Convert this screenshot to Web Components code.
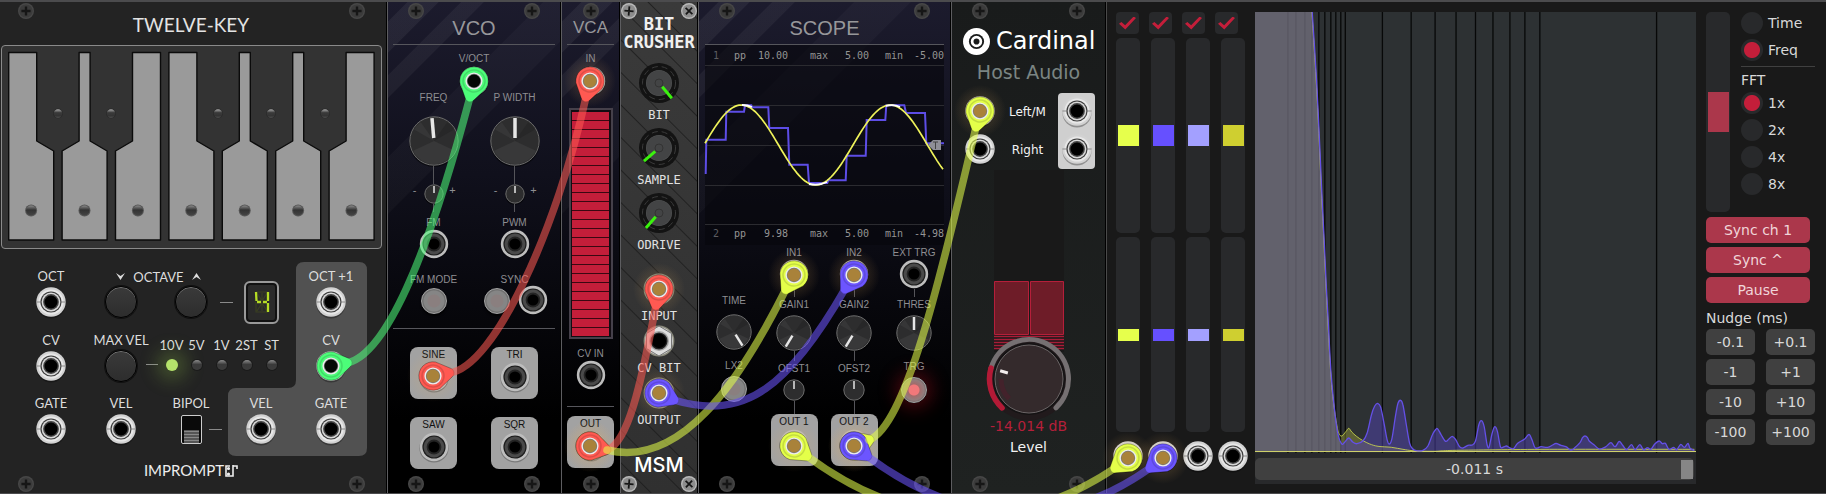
<!DOCTYPE html>
<html lang="en">
<head>
<meta charset="utf-8">
<meta name="viewport" content="width=device-width">
<title>Modular rack</title>
<style>
  html { background: #151515; }
  body { margin: 0; font-family: "Liberation Sans", sans-serif; }
</style>
</head>
<body>
<modular-rack>
  <key-module></key-module>
  <vco-module></vco-module>
  <vca-module></vca-module>
  <crusher-module></crusher-module>
  <scope-module></scope-module>
  <host-module></host-module>
  <analyzer-module></analyzer-module>
  <patch-cables slot="cables"></patch-cables>
</modular-rack>

<script>
const BASE = `*{box-sizing:border-box} svg{display:block;overflow:visible} hr{margin:0;border:0;width:100%;height:1px;background:#56565c}
button{font:inherit;color:inherit;margin:0;padding:0;border:0;cursor:pointer}`;

function define(name, css, render) {
  customElements.define(name, class extends HTMLElement {
    constructor() { super(); this.attachShadow({ mode: 'open' }); }
    connectedCallback() {
      const t = document.createElement('template');
      t.innerHTML = `<style>${BASE}${css}</style>${typeof render === 'function' ? render(this) : render}`;
      this.shadowRoot.replaceChildren(t.content.cloneNode(true));
    }
  });
}

// Point at clockwise angle a (degrees from twelve o'clock) and radius r.
const polar = (a, r) => {
  const t = (a - 90) * Math.PI / 180;
  return `${(Math.cos(t) * r).toFixed(2)} ${(Math.sin(t) * r).toFixed(2)}`;
};

/* ---------- rack ---------- */
define('modular-rack', `
  :host{display:block;position:relative;overflow:hidden;background:#4b4b4d;padding:2px 0 1px}
  .row{display:flex;align-items:stretch;isolation:isolate}
  ::slotted([slot=cables]){position:absolute;inset:0;pointer-events:none}
`, `<div class="row"><slot></slot></div><slot name="cables"></slot>`);

define('rack-screw', `:host{display:block;width:16px;height:16px}`, el => {
  const lt = el.hasAttribute('light');
  const turn = el.getAttribute('turn') || 0;
  return `<svg width="16" height="16" viewBox="-8 -8 16 16" aria-hidden="true">
    <circle r="8" fill="${lt ? '#b9b9b9' : '#474747'}"/><circle r="6.6" fill="${lt ? '#8d8d8d' : '#3b3b3b'}"/>
    <path transform="rotate(${turn})" d="M-4.6 0H4.6M0 -4.6V4.6" stroke="#161616" stroke-width="${lt ? 1.8 : 2.4}"/></svg>`;
});

define('module-frame', `
  :host{display:flex;flex-direction:column;height:100%;border-left:1px solid #5d5d60;border-right:1px solid #000}
  .screws{display:flex;justify-content:space-between;align-items:center;height:18px;padding:0 var(--screw-right,20px) 0 var(--screw-left,20px)}
  :host([single]) .screws{justify-content:center}
  .body{flex:1;display:flex;flex-direction:column}
`, el => {
  const lt = el.hasAttribute('light') ? 'light' : '';
  const a = `<rack-screw ${lt} ${lt && 'turn="5"'}></rack-screw>`;
  const b = el.hasAttribute('single') ? '' : `<rack-screw ${lt} ${lt && 'turn="42"'}></rack-screw>`;
  return `<div class="screws">${a}${b}</div><div class="body"><slot></slot></div><div class="screws">${a}${b}</div>`;
});

/* ---------- controls ---------- */
const JACKS = {
  silver: `<circle cy="2" r="14.5" fill="#000" opacity=".3"/><circle r="14.7" fill="#d2d2d2"/><circle r="12.6" fill="#e8e8e8"/>
    <path d="M-14.6 0H-10.6M10.6 0H14.6" stroke="#8a8a8a"/><circle r="10.6" fill="#3c3c3c"/><circle r="9.4" fill="#d8d8d8"/><circle r="7.9" fill="#444"/><circle r="6.5" fill="#000"/>`,
  dark: `<circle cy="1" r="14.6" fill="#000" opacity=".25"/><circle r="14.2" fill="#bdbdbd"/><circle r="11.6" fill="#1e1e1e"/><circle r="10.4" fill="#4a4a4a"/><circle r="7.4" fill="#242424"/><circle r="5.6" fill="#000"/>`,
  hex: `<circle r="15.4" fill="#8b8b7c"/><circle r="14" fill="#c9c9c9"/><path d="M0 -15L12.5 -7.5V7.5L0 15L-12.5 7.5V-7.5Z" fill="#dedede" stroke="#777"/><circle r="10" fill="#a4a4a4"/><circle r="8.6" fill="#222"/><circle r="7.2" fill="#000"/>`
};
define('jack-port', `
  :host{display:flex;flex-direction:column;align-items:center;white-space:nowrap}
  span{line-height:var(--lh,16px);margin-bottom:var(--lb,-2px)} span:empty{display:none}
  :host([below]){flex-direction:column-reverse;gap:4px}
  :host([plate]){width:47px;height:52px;padding-top:1px;gap:2px;background:#a2a2a2;border-radius:8px;color:#111}
  :host([plate]) span{line-height:14px}
`, el => `<span><slot></slot></span><svg width="30" height="30" viewBox="-15 -15 30 30" aria-hidden="true">${JACKS[el.getAttribute('kind') || 'dark']}</svg>`);

function knobArt(kind, size, angle) {
  const r = size / 2;
  if (kind === 'notched') {
    return `<circle r="20" fill="#131313"/><circle r="16.5" fill="none" stroke="#3a3a3a" stroke-width="1" stroke-dasharray="6 4"/>
      <circle r="13" fill="#505152"/><circle r="12.4" fill="#434445"/><circle r="4" fill="none" stroke="#333"/>
      <path transform="rotate(${angle})" d="M0 -5V-20" stroke="#3bf20e" stroke-width="3"/>`;
  }
  if (kind === 'level') {
    const k = 39.5;
    return `<circle r="41.500" fill="#211a1c"/>
      <path d="M${polar(-74, k)}A${k} ${k} 0 1 1 ${polar(137, k)}" fill="none" stroke="#757072" stroke-width="5" stroke-linecap="round"/>
      <path d="M${polar(223, k)}A${k} ${k} 0 0 1 ${polar(286, k)}" fill="none" stroke="#b31a36" stroke-width="5.5" stroke-linecap="round"/>
      <circle r="36" fill="#151314"/><circle r="34" fill="#342a2c" stroke="#6b6566"/>
      <path d="M${polar(225, 28)}A28 28 0 0 1 ${polar(270, 28)}" fill="none" stroke="#43222b" stroke-width="5"/>
      <path transform="rotate(-74)" d="M0 -22V-30" stroke="#f2eded" stroke-width="3"/>`;
  }
  const big = size > 30;
  return `<circle cy="1" r="${r}" fill="#000" opacity=".5"/><circle r="${r - .8}" fill="#2d2d2e" stroke="#6c6c6c" stroke-width="1"/>
    ${big ? `<path d="M0 0L${polar(115, r - 2)}A${r - 2} ${r - 2} 0 0 1 ${polar(245, r - 2)}Z" fill="#383839"/><path d="M0 0L${polar(-60, r - 2)}A${r - 2} ${r - 2} 0 0 1 ${polar(-35, r - 2)}Z" fill="#363637"/><path d="M0 0L${polar(35, r - 2)}A${r - 2} ${r - 2} 0 0 1 ${polar(60, r - 2)}Z" fill="#272728"/>` : ''}
    <path transform="rotate(${angle})" d="M0 ${big ? -3 : -1}V${-r + 2}" stroke="#e6e6e6" stroke-width="${size > 40 ? 3.5 : big ? 2.5 : 1.5}"/>`;
}
define('rotary-knob', `
  :host{display:grid;place-items:center}
  svg,input{grid-area:1/1}
  input{width:100%;height:100%;margin:0;opacity:0;cursor:grab;min-width:0}
`, el => {
  const s = +el.getAttribute('size') || 50;
  return `<svg width="${s}" height="${s}" viewBox="${-s / 2} ${-s / 2} ${s} ${s}" aria-hidden="true">${knobArt(el.getAttribute('kind'), s, el.getAttribute('angle') || 0)}</svg>
    <input type="range" aria-label="${el.getAttribute('name')}" style="width:${s}px;height:${s}px">`;
});

define('push-button', `
  :host{display:block;width:26px;height:26px}
  button{display:block;width:100%;height:100%;border-radius:50%;border:1px solid #a5a5a5;background:radial-gradient(circle,#8a7f7f 0 6px,#858585 7px 10px,#707070 11px);box-shadow:0 2px 2px #000c}
  :host([lit]) button{background:radial-gradient(circle,#f2787a 0 5px,#a26b6b 6px,#927c7c 10px,#7a6c6c 12px);box-shadow:0 0 18px 5px #b0101c66}
  :host([round]){width:32px;height:32px}
  :host([round]) button{background:linear-gradient(#3a3a3a,#2d2d2d);border:1px solid #000;box-shadow:0 0 0 1px #111,inset 0 1px #777}
`, el => `<button type="button" aria-label="${el.getAttribute('name')}"></button>`);

define('status-led', `
  :host{display:block;width:10px;height:10px;border-radius:50%;background:linear-gradient(#8d8d8d,#3a3a3a 45%,#3c3c3c);box-shadow:0 0 0 1px #1b1b1b}
  :host([on]){width:12px;height:12px;background:#b5e36b;box-shadow:0 0 18px 9px #9bd04a44}
`, '');

/* ---------- Twelve-Key ---------- */
function keyboard() {
  const w = 45, top = 6.5, bot = 194, y1 = 95, y2 = 105;
  const upper = [[0, 28], [17, 28], [17, 45], [0, 28], [17, 28], [17, 28], [17, 45]];
  return upper.map(([a, b], i) => {
    const x = Math.round((6.7 + 53.4 * i) * 10) / 10, L = x + a, R = x + b;
    const left = a ? `L${x} ${y2}L${L} ${y1}V${top}` : `V${top}`;
    const right = b < w ? `V${y1}L${x + w} ${y2}V${bot}` : `V${bot}`;
    return `<path d="M${x} ${bot}${left}H${R}${right}Z" fill="#9a9a9a" stroke="#0b0b0b" stroke-width="1.400" stroke-linejoin="round"/>
      <circle cx="${x + 22.4}" cy="164.500" r="6" fill="#555"/><circle cx="${x + 22.4}" cy="164.500" r="5" fill="url(#d)"/>`;
  }).join('') + [56, 109, 216, 269, 323].map(x => `<circle cx="${x}" cy="67.500" r="5" fill="#2b2b2b"/><circle cx="${x}" cy="67.500" r="4.200" fill="url(#s)"/>`).join('');
}
define('key-module', `
  :host{display:block;flex:none;width:387px;background:#232323;color:#ddd;font:13px/20px Lato,sans-serif}
  module-frame{--screw-left:18px;--screw-right:21px;border-left:0}
  h2{margin:-1px 4px 14px 0;font-size:19px;font-weight:400;line-height:12px;text-align:center;color:#e4e4e4}
  .keys{width:381px;height:204px;margin-left:1px;border:1px solid #8a8a8a;border-radius:4px;background:#333}
  .grid{display:grid;grid-template-columns:repeat(5,70px);grid-template-rows:64px 63px 51px;margin:17px 0 0 16px}
  .plate{grid-area:1/4/4/6}
  .grid>*{z-index:1}
  .grid>.plate{z-index:0}
  jack-port{--lh:21px;--lb:0}
  .oct{grid-area:1/2/2/5}
  .oct .lab{display:flex;justify-content:center;align-items:center;gap:8px;width:145px;height:21px}
  .line{display:flex;align-items:center;height:30px}
  .oct .line{padding-left:19px}
  i{display:block;width:13px;height:1px;background:#8a8a8a}
  .disp{width:35px;height:43px;border:2px solid #999;border-radius:6px;background:#2a2a2a;box-shadow:inset 0 0 0 2px #111;display:grid;place-items:center}
  .vel{grid-area:2/2/3/5;display:flex}
  .vel .max{width:70px;display:flex;flex-direction:column;align-items:center;line-height:21px;white-space:nowrap}
  .vel i{margin:34px 0 0 -10px;width:12px}
  .leds{display:grid;grid-template-columns:repeat(5,25px);grid-template-rows:16px 24px;place-items:center;margin:7px 0 0 1px;line-height:16px;white-space:nowrap}
  .bip{display:grid;grid-template-columns:1fr 21px 1fr;grid-template-rows:21px 30px;align-items:center}
  .bip label{grid-column:1/4;text-align:center;line-height:21px}
  .bip input{grid-column:2;appearance:none;margin:0;width:21px;height:29px;border:1px solid #ccc;border-radius:2px;background:repeating-linear-gradient(#555 0 1px,#888 1px 2px,#555 2px 3px) 50% 100%/15px 13px no-repeat #0a0a0a}
  .bip i{margin-left:7px}
  .brand{display:flex;justify-content:center;align-items:center;gap:1px;margin:21px 4px 0 0;height:10px;font-size:15px;line-height:10px;color:#eee}
`, () => {
  const jack = (row, col, t) => `<jack-port kind="silver" style="grid-area:${row}/${col}">${t}</jack-port>`;
  return `<module-frame>
  <h2>TWELVE-KEY</h2>
  <div class="keys"><svg width="379" height="202" viewBox="0 0 379 202" aria-hidden="true">
    <defs><linearGradient id="d" x2="0" y2="1"><stop stop-color="#8a8a8a"/><stop offset=".45" stop-color="#333"/><stop offset="1" stop-color="#444"/></linearGradient>
    <linearGradient id="s" x2="0" y2="1"><stop stop-color="#aaa"/><stop offset=".4" stop-color="#3a3a3a"/><stop offset=".8" stop-color="#333"/><stop offset="1" stop-color="#555"/></linearGradient></defs>${keyboard()}</svg></div>
  <div class="grid">
    <svg class="plate" width="140" height="178" viewBox="0 0 140 178" aria-hidden="true"><path d="M78 -4H133Q141 -4 141 4V182Q141 190 133 190H10Q2 190 2 182V130Q2 122 10 122H62Q70 122 70 114V4Q70 -4 78 -4Z" fill="#515151"/></svg>
    ${jack(1, 1, 'OCT')}
    <div class="oct"><div class="lab">
        <svg width="9" height="7" aria-hidden="true"><path d="M0 0L4.500 7L9 0L4.500 3Z" fill="#ddd"/></svg>OCTAVE<svg width="9" height="7" aria-hidden="true"><path d="M0 7L4.500 0L9 7L4.500 4Z" fill="#ddd"/></svg></div>
      <div class="line"><push-button round name="Octave down"></push-button><push-button round name="Octave up" style="margin-left:38px"></push-button><i style="margin:0 11px 0 13px"></i>
        <div class="disp" role="img" aria-label="4"><svg width="16" height="22" viewBox="0 0 16 22" fill="none" stroke-width="2.300"><path d="M2 1H14M2 11V21H14M3 2L8 10L13 2M3 20L8 12L13 20M8 2V20" stroke="#3a3f22" stroke-width="1.200"/><path d="M2 1L2.500 10M3 11H7M9 11H13M14 1L14 10M14 12V21" stroke="#b5dc24"/></svg></div></div></div>
    ${jack(1, 5, 'OCT +1')}
    ${jack(2, 1, 'CV')}
    <div class="vel"><div class="max">MAX VEL<push-button round name="Max velocity" style="margin-top:-1px"></push-button></div><i></i>
      <div class="leds"><span>10V</span><span>5V</span><span>1V</span><span>2ST</span><span>ST</span><status-led on></status-led><status-led></status-led><status-led></status-led><status-led></status-led><status-led></status-led></div></div>
    ${jack(2, 5, 'CV')}
    ${jack(3, 1, 'GATE')}
    ${jack(3, 2, 'VEL')}
    <div class="bip" style="grid-area:3/3"><label for="bp">BIPOL</label><input id="bp" type="checkbox"><i></i></div>
    ${jack(3, 4, 'VEL')}
    ${jack(3, 5, 'GATE')}
  </div>
  <div class="brand">IMPROMPT<svg width="13" height="13" viewBox="0 0 13 13" fill="none" stroke="#eee" stroke-width="1.600" aria-hidden="true"><path d="M5 2H1V12H8V1"/><circle cx="3.500" cy="10" r=".8"/><path d="M8 2H12V5"/><circle cx="3.500" cy="4.500" r=".8"/></svg></div>
</module-frame>`;
});

/* ---------- Fundamental-style panels share a look ---------- */
const NIGHT = `
  :host{display:block;flex:none;color:#8e8e92;font:10px/14px "Liberation Sans",sans-serif;
    background:linear-gradient(135deg,#fff0 14px,#ffffff0e 15px 36px,#fff0 37px 52px,#ffffff0c 53px 68px,#fff0 69px 110px,#ffffff07 111px 150px,#fff0 151px),linear-gradient(#1c1b2d,#10101c 35%,#07070c 62%,#000 85%)}
  h2{margin:0 0 8px;font-size:20px;font-weight:400;line-height:16px;text-align:center;color:#97979a}
  .col{display:flex;flex-direction:column;align-items:center}
  .col>span{line-height:16px;margin-bottom:-2px}
  .stem{width:1px;background:#55555a}`;

define('vco-module', `${NIGHT}
  :host{width:174px}
  .pad{padding:0 5px;display:flex;flex-direction:column;align-items:center}
  .two{display:grid;grid-template-columns:81px 81px;justify-items:center;justify-content:center;width:100%}
  .trim{display:grid;grid-template-columns:16px 20px 16px;justify-items:center;gap:1px;line-height:12px;font-size:11px}
  .pair{display:flex;align-items:center;gap:8px;height:30px}
`, `<module-frame><h2>VCO</h2><div class="pad"><hr>
  <jack-port style="margin-top:6px;height:39px;gap:1px">V/OCT</jack-port>
  <div class="two">
    ${[['FREQ', 'FM', -5], ['P WIDTH', 'PWM', 0]].map(([a, b, g]) => `<div class="col"><span>${a}</span><rotary-knob size="50" angle="${g}" name="${a}" style="margin-top:12px"></rotary-knob><div class="stem" style="height:18px"></div><div class="trim">-<rotary-knob size="20" name="${b} amount"></rotary-knob>+</div><div class="stem" style="height:8px;margin-bottom:3px"></div><jack-port>${b}</jack-port></div>`).join('')}
    <div class="col" style="margin-top:13px"><span>FM MODE</span><div class="pair"><push-button name="FM mode"></push-button></div></div>
    <div class="col" style="margin-top:13px"><span>SYNC</span><div class="pair" style="padding-left:2px"><push-button name="Sync"></push-button><jack-port></jack-port></div></div>
  </div>
  <hr style="margin:12px 0 18px">
  <div class="two" style="row-gap:18px">${['SINE', 'TRI', 'SAW', 'SQR'].map(t => `<jack-port plate>${t}</jack-port>`).join('')}</div>
</div></module-frame>`);

define('vca-module', `${NIGHT}
  :host{width:59px}
  h2{font-size:17px}
  .pad{padding:0 5px;display:flex;flex-direction:column;align-items:center}
  .meter{width:44px;height:231px;margin:12px 0 7px;border:2px solid #45404a;padding:2px;background:repeating-linear-gradient(#c41e3a 0 8px,#3a0812 8px 9px) 50% 50%/37px 224px no-repeat #120c12}
`, `<module-frame single><h2>VCA</h2><div class="pad"><hr>
  <jack-port style="margin-top:6px;gap:1px">IN</jack-port>
  <div class="meter" role="img" aria-label="Level meter"></div>
  <jack-port>CV IN</jack-port>
  <hr style="margin:16px 0 9px"><jack-port plate>OUT</jack-port>
</div></module-frame>`);

define('crusher-module', `
  :host{display:block;flex:none;width:78px;color:#e2e2e2;font:12px/16px "DejaVu Sans Mono",monospace;
    background:repeating-linear-gradient(45deg,#1c1c1c00 0 21px,#1c1c1ccc 22px,#1c1c1c00 23px),linear-gradient(#3a3a3a,#303030)}
  module-frame{--screw-left:0px;--screw-right:0px}
  h2{margin:-5px -4px 12px;font-size:17px;line-height:18px;text-align:center;color:#f0f0f0}
  .k{display:flex;flex-direction:column;align-items:center;gap:4px;margin-bottom:5px}
  jack-port{--lh:16px;--lb:0;margin-bottom:2px}
  .logo{margin-top:25px;text-align:center;font:500 20px/20px Inter,sans-serif;color:#fff}
`, `<module-frame light><h2>BIT<br>CRUSHER</h2>
  ${[['BIT', 140], ['SAMPLE', 229], ['ODRIVE', 221]].map(([t, a]) => `<div class="k"><rotary-knob kind="notched" size="40" angle="${a}" name="${t}"></rotary-knob>${t}</div>`).join('')}
  <jack-port below kind="hex" style="margin-top:16px">INPUT</jack-port><jack-port below kind="hex">CV BIT</jack-port><jack-port below kind="hex">OUTPUT</jack-port>
  <div class="logo">MSM</div></module-frame>`);

/* ---------- Scope ---------- */
function sine() {
  let d = '';
  for (let x = 0; x <= 239; x += 2) d += `${d ? 'L' : 'M'}${x} ${(80 - 40 * Math.sin((x + 1) / 149 * 2 * Math.PI)).toFixed(1)}`;
  return d;
}
const STEPS = [[47,522],[49,419],[107,419],[109,335],[162,335],[165,316],[184,316],[186,322],[235,322],[238,384],[294,384],[298,494],[353,494],[357,549],[412,549],[415,541],[467,541],[470,467],[527,467],[530,360],[586,360],[589,316],[643,316],[648,339],[705,339],[709,430],[762,430]]
  .map(([x, y], i) => `${i ? 'L' : 'M'}${(x / 3 - 15).toFixed(1)} ${(y / 3 - 65).toFixed(1)}`).join('');
define('scope-module', `${NIGHT}
  :host{width:253px}
  .pad{padding:0 6px}
  .screen{background:#07070c99}
  .stats{display:grid;grid-template-columns:21px 24px 30px 40px 41px 34px 1fr;padding-left:8px;height:20px;align-items:start;font:10px/22px "DejaVu Sans Mono",monospace;color:#949494;margin:0}
  .stats b{font-weight:400;color:#5c5c60} .stats span:nth-child(n+3){text-align:right}
  svg+.stats{line-height:18px}
  .four{display:grid;grid-template-columns:repeat(4,60px);margin-left:-1px;white-space:nowrap}
  .stem{margin:0 auto}
`, () => {
  const stats = (n, a, b, c) => `<div class="stats"><b>${n}</b><span>pp</span><span>${a}</span><span>max</span><span>${b}</span><span>min</span><span>${c}</span></div>`;
  return `<module-frame><h2>SCOPE</h2><div class="pad"><hr>
  <div class="screen">${stats(1, '10.00', '5.00', '-5.00')}
    <svg width="239" height="160" viewBox="0 0 239 160" fill="none" role="img" aria-label="Waveforms">
      <path d="M0 .5H239M0 40.500H239M0 80.500H239M0 120.500H239M0 159.500H239" stroke="#2b2b30"/>
      <path d="${STEPS}" stroke="#5d4de6" stroke-width="2"/>
      <path d="${sine()}" stroke="#eef25a" stroke-width="1.700"/>
      <path d="M37 40q6 0 10 2M104 119q10 2 18 -2M181 41q8 -2 14 1" stroke="#fff" stroke-width="1.800"/>
      <path d="M223 80L228 75H236V85H228Z" fill="#8f8f97"/><path d="M228 77H233M230.500 77V84" stroke="#444"/></svg>
    ${stats(2, '9.98', '5.00', '-4.98')}</div>
  <div class="four">
    <div class="col" style="padding-top:49px">TIME<rotary-knob size="36" angle="148" name="Time" style="margin-top:6px"></rotary-knob><span style="margin:8px 0 2px">LX2</span><push-button name="LX2"></push-button></div>
    ${[1, 2].map(n => `<div class="col"><jack-port>IN${n}</jack-port><div class="stem" style="height:8px"></div><span>GAIN${n}</span><rotary-knob size="36" angle="211" name="Gain ${n}" style="margin-top:4px"></rotary-knob><div class="stem" style="height:10px"></div><span>OFST${n}</span><rotary-knob size="22" name="Offset ${n}" style="margin-top:4px"></rotary-knob><div class="stem" style="height:13px"></div><jack-port plate>OUT ${n}</jack-port></div>`).join('')}
    <div class="col"><jack-port>EXT TRG</jack-port><div class="stem" style="height:8px"></div><span>THRES</span><rotary-knob size="36" name="Threshold" style="margin-top:4px"></rotary-knob><span style="margin:8px 0 2px">TRG</span><push-button lit name="Trigger"></push-button></div>
  </div></div></module-frame>`;
});

/* ---------- Cardinal host audio ---------- */
define('host-module', `
  :host{display:block;flex:none;width:155px;color:#f2f2f2;font:12px/16px "DejaVu Sans",sans-serif;background:linear-gradient(#191b1b,#1f2221)}
  .brand{display:flex;align-items:center;gap:6px;margin:6px 0 0 11px;height:30px;font-size:24px;line-height:34px;color:#fff}
  h3{margin:6px 0 11px;font-size:19px;line-height:20px;font-weight:400;text-align:center;color:#7b8583}
  .io{display:grid;grid-template-columns:55px 41px 57px;place-items:center;grid-template-rows:38px 38px;white-space:nowrap}
  .io .out{grid-area:1/3/3/4;width:37px;height:76px;border-radius:4px;background:#cfcfcf;display:grid;place-items:center}
  .meter{align-self:center;width:70px;height:182px;margin-top:1px;background:#191919}
  .db{margin-top:-2px;text-align:center;font-size:14px;color:#b51f3a} .lv{margin-top:5px;text-align:center;font-size:14px}
`, () => {
  let bars = '';
  for (let y = 166.5; y < 181; y += 3) bars += `M0 ${y}H70`;
  return `<module-frame>
  <div class="brand"><svg width="27" height="27" viewBox="-13 -13 26 26" aria-hidden="true"><circle r="13" fill="#fff"/><circle r="7.300" fill="#191b1b"/><circle r="4.200" fill="none" stroke="#fff" stroke-width="2.600"/></svg>Cardinal</div>
  <h3>Host Audio</h3>
  <div class="io"><jack-port kind="silver"></jack-port><span>Left/M</span><div class="out"><jack-port kind="silver"></jack-port><jack-port kind="silver"></jack-port></div><jack-port kind="silver" style="grid-area:2/1"></jack-port><span>Right</span></div>
  <div class="meter"><svg width="70" height="182" viewBox="0 0 70 182" role="img" aria-label="Output level"><path d="M.5 111.500H34.500V164.500H.5ZM36.500 111.500H69.500V164.500H36.500Z" fill="#6e1c28" stroke="#b51f3a"/><path d="${bars}" stroke="#a81d38" stroke-width="1.500"/></svg></div>
  <rotary-knob kind="level" size="82" name="Level" style="margin-top:-14px"></rotary-knob>
  <div class="db">-14.014 dB</div><div class="lv">Level</div></module-frame>`;
});

/* ---------- Analyzer ---------- */
// Spectrum samples on a 3x grid whose origin is 15,36.
const EDGE = [[187,36],[200,240],[208,400],[215,560],[222,700],[229,850],[236,980],[243,1110],[250,1190]];
const VIOLET = [...EDGE,[262,1290],[275,1331],[286,1325],[297,1314],[310,1327],[322,1331],[340,1322],[352,1300],[365,1245],[375,1218],[384,1210],[393,1222],[402,1265],[412,1318],[419,1332],[427,1315],[437,1250],[445,1210],[453,1201],[460,1215],[470,1275],[480,1330],[490,1347],[500,1352],[520,1351],[535,1338],[548,1305],[557,1290],[564,1286],[575,1305],[588,1324],[598,1317],[608,1309],[618,1318],[630,1340],[640,1344],[655,1336],[668,1335],[678,1323],[688,1275],[696,1262],[704,1280],[713,1335],[719,1340],[728,1300],[736,1280],[744,1295],[753,1340],[762,1341],[771,1338],[780,1343],[792,1346],[805,1330],[826,1317],[839,1303],[848,1320],[858,1344],[875,1340],[895,1342],[910,1335],[920,1330],[935,1336],[950,1340],[965,1350],[978,1342],[992,1328],[1000,1313],[1007,1308],[1015,1313],[1020,1323],[1035,1335],[1050,1347],[1070,1340],[1085,1328],[1098,1340],[1110,1324],[1120,1335],[1132,1349],[1147,1334],[1158,1349],[1172,1334],[1183,1349],[1195,1343],[1205,1348],[1217,1332],[1230,1323],[1240,1331],[1249,1330],[1260,1348],[1274,1342],[1283,1349],[1295,1333],[1306,1342],[1317,1330],[1323,1345],[1336,1351]];
const GOLD = [...EDGE.map(([x, y]) => [x - 1, y]),[260,1270],[267,1300],[276,1308],[288,1295],[297,1285],[306,1296],[320,1309],[340,1322],[360,1332],[385,1339],[425,1342],[460,1348],[490,1352],[550,1354],[620,1351],[900,1348],[1336,1348]];
function smooth(pts) {
  const p = pts.map(([x, y]) => [x / 3 - 5, y / 3 - 12]);
  let d = `M${p[0].join(' ')}`;
  for (let i = 0; i < p.length - 1; i++) {
    const a = p[i - 1] || p[i], b = p[i], c = p[i + 1], e = p[i + 2] || c;
    d += `C${[b[0] + (c[0] - a[0]) / 6, b[1] + (c[1] - a[1]) / 6, c[0] - (e[0] - b[0]) / 6, c[1] - (e[1] - b[1]) / 6, c[0], c[1]].map(v => v.toFixed(1)).join(' ')}`;
  }
  return d;
}
const LINES = [33,41,50,57,64,70,76,81,86,90.5,127.7,156.5,180.5,201.5,221,238.5,255.5,270.5,285.5,402.500];
define('spectrum-graph', `:host{display:block;background:#2d3133} svg{width:100%;height:441px;overflow:hidden} path{vector-effect:non-scaling-stroke}`,
() => {
  const area = ' L442 440H0V0Z', a = smooth(VIOLET), g = smooth(GOLD);
  return `<svg viewBox="0 0 442 441" preserveAspectRatio="none" fill="none" role="img" aria-label="Frequency spectrum">
    <defs><clipPath id="l"><rect width="86" height="441"/></clipPath><clipPath id="r"><rect x="86" width="360" height="441"/></clipPath></defs>
    <path d="${LINES.map(x => `M${x} 0V441`).join('')}" stroke="#070808" stroke-width="1.300"/>
    <path clip-path="url(#l)" d="${a}${area}" fill="#747180" fill-opacity=".75"/>
    <g clip-path="url(#r)"><path d="${g}${area}" fill="#a5a93c" fill-opacity=".4"/><path d="${a}${area}" fill="#4e41a5" fill-opacity=".55"/></g>
    <path d="${g}" stroke="#d3e04c" stroke-opacity=".8"/>
    <path d="M0 439.500H442" stroke="#cfd06a"/>
    <path d="${a}" stroke="#6450e6" stroke-width="1.300"/></svg>`;
});

define('analyzer-module', `
  :host{display:grid;flex:1;min-width:480px;grid-template-columns:129px 1fr 109px;column-gap:10px;align-items:start;padding:10px 11px 9px 10px;background:#191919;color:#d8d8d8;font:14px/16px "DejaVu Sans",sans-serif;box-shadow:inset 1px 0 #4a4a4a}
  .checks{display:flex;gap:10px}
  input{appearance:none;margin:0;display:block}
  .checks input{width:23px;height:22px;border-radius:4px;background:#28292b;display:grid;place-items:center}
  .checks input:checked::before{content:"";width:17px;height:13px;background:#c41e3a;clip-path:polygon(0 55%,14% 42%,36% 68%,86% 0,100% 12%,37% 100%)}
  .bank{display:grid;grid-template-columns:repeat(4,24px);gap:4px 11px;margin-top:4px;justify-items:center}
  .v{writing-mode:vertical-lr;width:24px;height:195px;padding:0 1px 0 2px;border-radius:5px;background:#28292b}
  .v::-webkit-slider-thumb{-webkit-appearance:none;width:21px;height:var(--t,21px);background:var(--c)}
  .bank jack-port{margin-top:7px}
  .time{display:grid;align-items:center;padding:5px 2px 4px 0;background:#28292b}
  .time>*{grid-area:1/1}
  .time input{width:100%;height:22px;border-radius:5px;background:#404040;padding:0 1px}
  .time input::-webkit-slider-thumb{-webkit-appearance:none;width:12px;height:19px;background:#868686}
  .time output{text-align:center;z-index:1;pointer-events:none;justify-self:center}
  .top{display:grid;grid-template-columns:24px 1fr;column-gap:11px}
  .top .v{height:200px;--t:40px;--c:#ab374b}
  .opts{display:flex;flex-direction:column}
  fieldset{border:0;margin:0;padding:0;display:flex;flex-direction:column;gap:5px;min-width:0}
  legend{padding:0;margin-bottom:4px;line-height:16px}
  .opts label{display:flex;align-items:center;gap:5px;height:22px}
  .opts input{width:22px;height:22px;border-radius:50%;background:#28292b}
  .opts input:checked{background:radial-gradient(circle,#c41e3a 7.5px,#28292b 8.500px)}
  .opts hr{margin:5px 0;background:#404040}
  .main{display:grid;gap:4px;width:104px;margin:5px 0 7px}
  .main button{height:26px;border-radius:5px;background:#ab374b;color:#f0d5d9}
  .nudge{display:grid;grid-template-columns:49px 49px;gap:4px 11px;margin-top:3px}
  .nudge button{height:26px;border-radius:5px;background:#404040;white-space:nowrap}
`, () => {
  const cols = ['#e6ff4c', '#6650ff', '#a3a0ff', '#cfcf30'];
  const radio = (g, t, on) => `<label><input type="radio" name="${g}" ${on ? 'checked' : ''}>${t}</label>`;
  return `<div>
    <div class="checks">${cols.map((c, i) => `<input type="checkbox" checked aria-label="Channel ${i + 1}">`).join('')}</div>
    <div class="bank">
      ${cols.map((c, i) => `<input class="v" type="range" aria-label="Offset ${i + 1}" style="--c:${c}">`).join('')}
      ${cols.map((c, i) => `<input class="v" type="range" aria-label="Scale ${i + 1}" style="--t:12px;--c:${c}">`).join('')}
      ${cols.map(() => '<jack-port kind="silver"></jack-port>').join('')}
    </div></div>
  <div><spectrum-graph></spectrum-graph><div class="time"><input type="range" value="100" id="t" aria-label="Time offset"><output for="t">-0.011 s</output></div></div>
  <div>
    <div class="top"><input class="v" type="range" aria-label="Gain">
      <div class="opts"><fieldset aria-label="Domain">${radio('d', 'Time')}${radio('d', 'Freq', 1)}</fieldset><hr>
        <fieldset><legend>FFT</legend>${radio('f', '1x', 1)}${radio('f', '2x')}${radio('f', '4x')}${radio('f', '8x')}</fieldset></div></div>
    <div class="main"><button type="button">Sync ch 1</button><button type="button">Sync ^</button><button type="button">Pause</button></div>
    Nudge (ms)
    <div class="nudge">${['-0.1', '+0.1', '-1', '+1', '-10', '+10', '-100', '+100'].map(t => `<button type="button">${t}</button>`).join('')}</div>
  </div>`;
});

/* ---------- cables ---------- */
const C = { g: '#4dfd79', r: '#ff5a52', y: '#e4ff4a', p: '#6c55ff' };
// jack x, jack y, tail x, tail y, colour, core colour
const PLUGS = [
  [474,81,470,97,'g','#050805'],[331,366,347,363,'g','#050805'],
  [590,81,586,97,'r'],[433,376,449,373,'r'],[659,289,656,305,'r'],
  [590,446,607,450,'y'],[590,446,607,450,'r'],[794,275,786,289,'y'],[659,393,674,400,'p'],[854,275,845,289,'p'],
  [854,446,869,440,'y'],[980,111,976,127,'y'],[794,446,807,456,'y'],[854,446,867,456,'p'],
  [1128,458,1115,468,'y'],[1163,458,1150,468,'p']];
const CABLES = [
  ['g','M470 97C427 260 385 355 347 363'],['r','M586 97C558 225 495 368 449 373'],
  ['r','M656 305C640 390 628 440 608 450'],['y','M607 450C680 468 738 385 786 289'],
  ['p','M674 400C745 422 790 385 845 289'],['y','M976 127C938 290 905 425 869 440'],
  ['y','M807 456C920 540 1030 525 1115 468'],['p','M867 456C972 534 1070 525 1150 468']];
define('patch-cables', `:host{display:block} svg{width:100%;height:100%}`, () => {
  const plug = ([x, y, tx, ty, c, core = '#a9823a']) => {
    const a = Math.atan2(ty - y, tx - x) * 180 / Math.PI;
    const lit = core === '#a9823a' ? '<circle r="26" fill="url(#glow)"/>' : '';
    return `<g transform="translate(${x} ${y})">${lit}<g transform="rotate(${a.toFixed(1)})"><path d="M5 -13.300L18.500 -4.500A5 5 0 0 1 18.500 4.500L5 13.300A14.200 14.200 0 1 1 5 -13.300Z" fill="${C[c]}" stroke="#0006" stroke-width=".7"/><circle r="11" fill="none" stroke="#0002" stroke-width="1.500"/></g>
      <circle r="8.600" fill="#ececec"/><circle r="7.200" fill="#777"/><circle r="6.500" fill="${core}"/></g>`;
  };
  return `<svg aria-hidden="true"><defs><radialGradient id="glow"><stop offset=".4" stop-color="#e8b060" stop-opacity=".16"/><stop offset="1" stop-color="#e8b060" stop-opacity="0"/></radialGradient></defs>
    ${PLUGS.map(plug).join('')}
    ${CABLES.map(([c, d]) => `<path d="${d}" fill="none" stroke="${C[c]}" stroke-width="7.500" stroke-linecap="round" opacity=".56"/>`).join('')}</svg>`;
});
</script>
</body>
</html>
